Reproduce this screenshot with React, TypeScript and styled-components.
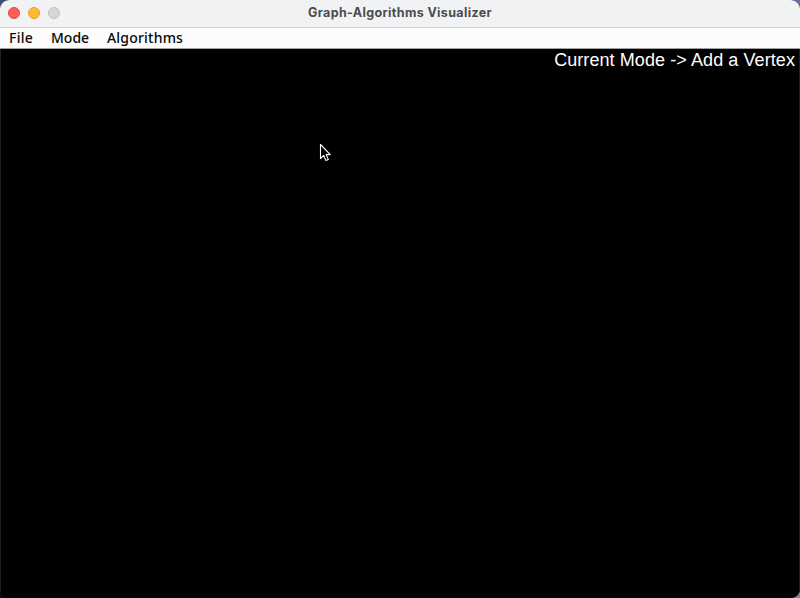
import React from "react";
import styled, { createGlobalStyle } from "styled-components";

const GlobalStyle = createGlobalStyle`
  * { box-sizing: border-box; }
  body { margin: 0; overflow: hidden; background: #000; }
`;

const Desktop = styled.div`
  width: 800px;
  height: 598px;
  background:
    linear-gradient(#7d8793, #7d8793) right bottom / 20px 20px no-repeat,
    linear-gradient(#0a0a0a, #0a0a0a) left bottom / 20px 20px no-repeat,
    linear-gradient(90deg, #3d5076, #5f6ea3);
`;

const Window = styled.main`
  position: relative;
  display: flex;
  flex-direction: column;
  width: 100%;
  height: 100%;
  overflow: hidden;
  border-radius: 9px;
  background: #000;
`;

const TitleBar = styled.header`
  display: grid;
  grid-template-columns: 100px 1fr 100px;
  align-items: center;
  height: 28px;
  padding-bottom: 1px;
  background: #f1f2f4;
  border-bottom: 1px solid #d2d3d4;
`;

const WindowControls = styled.div`
  display: flex;
  gap: 8px;
  padding-left: 8px;
`;

const ControlDot = styled.span<{ $fill: string; $edge: string }>`
  width: 12px;
  height: 12px;
  border-radius: 50%;
  background: ${(p) => p.$fill};
  border: 1px solid ${(p) => p.$edge};
`;

const Title = styled.h1`
  margin: 0;
  padding-bottom: 1px;
  text-align: center;
  font: 700 12.5px/15px Inter, sans-serif;
  letter-spacing: 0.36px;
  color: #4b4c4d;
  white-space: nowrap;
`;

const MenuBar = styled.nav`
  display: flex;
  gap: 18px;
  height: 21px;
  padding-left: 9px;
  background: #fcfcfc;
  border-bottom: 1px solid #a0a2a2;
`;

const MenuItem = styled.span<{ $width: number; $spacing: number }>`
  width: ${(p) => p.$width}px;
  font: 500 14px/20px "Noto Sans", sans-serif;
  letter-spacing: ${(p) => p.$spacing}px;
  color: #080808;
  white-space: nowrap;
`;

const Canvas = styled.section`
  flex: 1;
  display: flex;
  justify-content: flex-end;
  align-items: flex-start;
  padding: 1px 4px 0 0;
  background: #000;
  border: solid #202020;
  border-width: 0 1px;
`;

const ModeLabel = styled.span`
  font: 18px/20px "Liberation Sans", Arial, sans-serif;
  letter-spacing: 0.08px;
  color: #fff;
  white-space: nowrap;
`;

const Pointer = styled.svg`
  position: absolute;
  left: 319px;
  top: 143px;
`;

const menus = [
  { label: "File", width: 24, spacing: 0.25 },
  { label: "Mode", width: 38, spacing: 0 },
  { label: "Algorithms", width: 76, spacing: 0.2 },
];

export default function App() {
  return (
    <Desktop>
      <GlobalStyle />
      <Window>
        <TitleBar>
          <WindowControls>
            <ControlDot $fill="#ff5c59" $edge="#df4947" />
            <ControlDot $fill="#ffbc30" $edge="#dfa025" />
            <ControlDot $fill="#d5d6d8" $edge="#bfc0c2" />
          </WindowControls>
          <Title>Graph-Algorithms Visualizer</Title>
        </TitleBar>
        <MenuBar>
          {menus.map((m) => (
            <MenuItem key={m.label} $width={m.width} $spacing={m.spacing}>
              {m.label}
            </MenuItem>
          ))}
        </MenuBar>
        <Canvas>
          <ModeLabel>Current Mode -&gt; Add a Vertex</ModeLabel>
        </Canvas>
        <Pointer width="14" height="20" viewBox="0 0 14 20" aria-hidden="true">
          <path
            d="M1.5 1.5V15.5L4.7 12.5L6.8 17.4L9.3 16.4L7.2 11.6H11.3Z"
            fill="#000"
            stroke="#fff"
            strokeWidth="1.1"
            strokeLinejoin="round"
          />
        </Pointer>
      </Window>
    </Desktop>
  );
}
